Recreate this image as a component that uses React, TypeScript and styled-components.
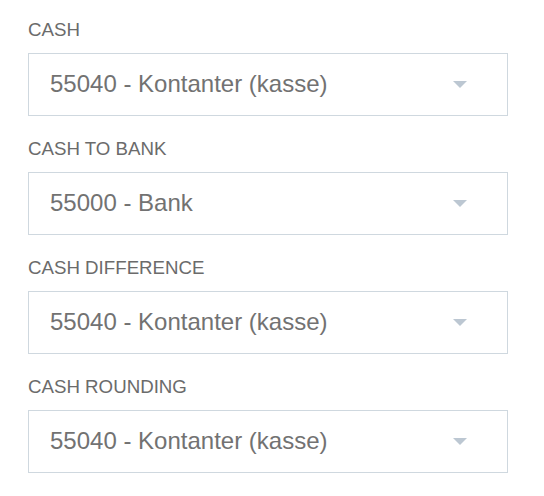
import React from "react";
import styled, { createGlobalStyle } from "styled-components";

const Global = createGlobalStyle`
  html, body { margin: 0; padding: 0; background: #ffffff; }
  body { font-family: "Liberation Sans", Arial, Helvetica, sans-serif; }
`;

const Page = styled.div`
  width: 480px;
  padding: 19px 28px 0 28px;
  display: flex;
  flex-direction: column;
  gap: 22px;
`;

const Field = styled.div`
  display: flex;
  flex-direction: column;
  gap: 12px;
`;

const Label = styled.div`
  font-size: 18.7px;
  line-height: 22px;
  color: #6b6b6b;
  text-transform: uppercase;
`;

const Select = styled.div`
  box-sizing: border-box;
  height: 63px;
  border: 1px solid #cfd8df;
  background: #ffffff;
  display: flex;
  align-items: center;
  justify-content: space-between;
  padding: 0 40px 2px 21px;
`;

const Value = styled.span`
  font-size: 24px;
  line-height: 24px;
  color: #727272;
  white-space: nowrap;
`;

const Arrow = styled.span`
  width: 0;
  height: 0;
  border-left: 7.5px solid transparent;
  border-right: 7.5px solid transparent;
  border-top: 7px solid #bcc7d2;
  margin-top: 1px;
`;

const fields = [
  { label: "Cash", value: "55040 - Kontanter (kasse)" },
  { label: "Cash to bank", value: "55000 - Bank" },
  { label: "Cash difference", value: "55040 - Kontanter (kasse)" },
  { label: "Cash rounding", value: "55040 - Kontanter (kasse)" },
];

export default function App() {
  return (
    <>
      <Global />
      <Page>
        {fields.map((f) => (
          <Field key={f.label}>
            <Label>{f.label}</Label>
            <Select>
              <Value>{f.value}</Value>
              <Arrow />
            </Select>
          </Field>
        ))}
      </Page>
    </>
  );
}
